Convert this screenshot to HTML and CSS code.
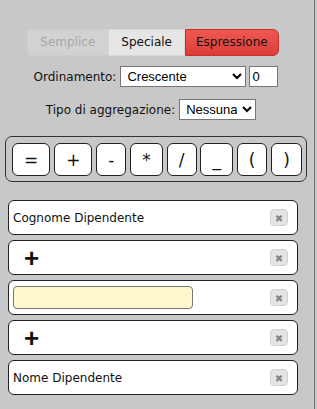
FILE: index.html
```html
<!DOCTYPE html>
<html lang="it">
<head>
    <meta charset="UTF-8">
    <title>Espressione</title>
    <link rel="stylesheet" href="styles.css">
</head>
<body>
    <div class="page">
        <div class="tabs">
            <span class="tab disabled">Semplice</span>
            <span class="tab">Speciale</span>
            <span class="tab active">Espressione</span>
        </div>

        <div class="row">
            <label>Ordinamento:</label>
            <select class="order-select">
                <option>Crescente</option>
            </select>
            <input class="order-num" type="text" value="0">
        </div>

        <div class="row agg">
            <label>Tipo di aggregazione:</label>
            <select class="agg-select">
                <option>Nessuna</option>
            </select>
        </div>

        <div class="ops">
            <button class="op">=</button>
            <button class="op">+</button>
            <button class="op">-</button>
            <button class="op">*</button>
            <button class="op">/</button>
            <button class="op">_</button>
            <button class="op">(</button>
            <button class="op">)</button>
        </div>

        <div class="items">
            <div class="item">
                <span class="field">Cognome Dipendente</span>
                <span class="del">&#10006;</span>
            </div>
            <div class="item">
                <span class="plus">+</span>
                <span class="del">&#10006;</span>
            </div>
            <div class="item">
                <input class="expr-input" type="text">
                <span class="del">&#10006;</span>
            </div>
            <div class="item">
                <span class="plus">+</span>
                <span class="del">&#10006;</span>
            </div>
            <div class="item">
                <span class="field">Nome Dipendente</span>
                <span class="del">&#10006;</span>
            </div>
        </div>
    </div>
</body>
</html>
```

FILE: styles.css
```css
body {
    margin: 0;
    padding: 0;
    background: #c8c8c8;
    font-family: 'DejaVu Sans', Verdana, sans-serif;
    font-size: 12px;
    color: #111;
}

.page {
    width: 315px;
    min-height: 409px;
    border-right: 1px solid #707070;
    box-sizing: border-box;
    padding: 29px 0 0 5px;
}

.tabs {
    display: flex;
    justify-content: center;
    width: 302px;
    padding-right: 6px;
    box-sizing: border-box;
}

.tab {
    height: 27px;
    line-height: 25px;
    padding: 0 12px;
    background: #e6e6e6;
    border: 1px solid #d8d8d8;
    box-sizing: border-box;
}

.tab.disabled {
    background: #d2d2d2;
    color: #a8a8a8;
    border-color: #cdcdcd;
    border-radius: 4px 0 0 4px;
}

.tab.active {
    background: linear-gradient(#f05853, #dc3c36);
    border-color: #c4302a;
    border-radius: 0 6px 6px 0;
    padding: 0 10px;
}

.row {
    display: flex;
    justify-content: center;
    align-items: center;
    gap: 4px;
    width: 302px;
    margin-top: 10px;
}

.row.agg {
    margin-top: 12px;
    padding-right: 10px;
    box-sizing: border-box;
}

select, .order-num {
    font-family: 'Liberation Sans', Arial, sans-serif;
    font-size: 13px;
    height: 21px;
    border: 1px solid #767676;
    background: #fff;
    color: #000;
    border-radius: 0;
    padding: 0 2px;
    box-sizing: border-box;
}

.order-select {
    width: 126px;
}

.order-num {
    width: 29px;
    margin-left: -1px;
}

.agg-select {
    width: 77px;
}

.ops {
    display: flex;
    justify-content: space-between;
    width: 302px;
    box-sizing: border-box;
    margin-top: 16px;
    padding: 6px 4px 5px 6px;
    border: 1px solid #333;
    border-radius: 7px;
}

.op {
    height: 33px;
    min-width: 29px;
    padding: 0 11px;
    background: #fff;
    border: 1px solid #222;
    border-radius: 6px;
    font-family: 'DejaVu Sans', Verdana, sans-serif;
    font-size: 17px;
    color: #111;
}

.items {
    display: flex;
    flex-direction: column;
    gap: 5px;
    width: 290px;
    margin: 18px 0 0 3px;
}

.item {
    display: flex;
    align-items: center;
    justify-content: space-between;
    height: 35px;
    padding: 0 9px 0 4px;
    background: #fff;
    border: 1px solid #222;
    border-radius: 6px;
    box-sizing: border-box;
}

.field {
    font-size: 12px;
}

.plus {
    font-family: 'Liberation Sans', Arial, sans-serif;
    font-size: 26px;
    font-weight: bold;
    padding-left: 11px;
    line-height: 1;
}

.expr-input {
    width: 180px;
    height: 23px;
    box-sizing: border-box;
    background: #fff8cc;
    border: 1px solid #777;
    border-radius: 4px;
}

.del {
    width: 18px;
    height: 17px;
    line-height: 17px;
    text-align: center;
    font-size: 10px;
    color: #858585;
    background: #e4e4e4;
    border: 1px solid #d2d2d2;
    border-radius: 4px;
    box-sizing: border-box;
}
```
